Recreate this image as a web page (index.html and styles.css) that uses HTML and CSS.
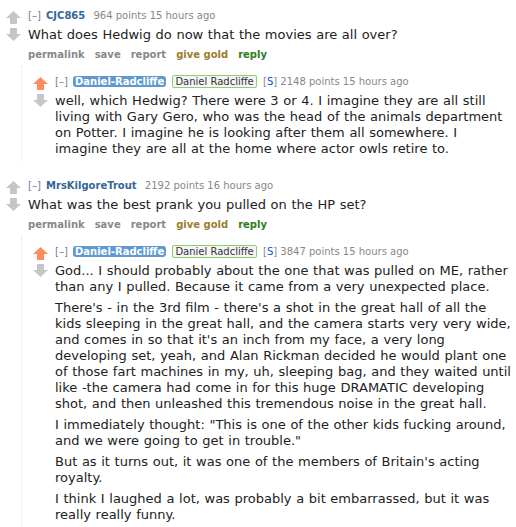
FILE: index.html
```html
<!DOCTYPE html>
<html lang="en">
<head>
    <meta charset="UTF-8">
    <title>Ask me anything - comments</title>
    <link rel="stylesheet" href="styles.css">
</head>
<body>
    <div class="comment top">
        <div class="midcol">
            <svg class="arrow" viewBox="0 0 15 14"><path d="M7.5 0 L15 7 H11 V13 H4 V7 H0 Z"/></svg>
            <svg class="arrow" viewBox="0 0 15 14"><path d="M4 1 H11 V7 H15 L7.5 14 L0 7 H4 Z"/></svg>
        </div>
        <div class="entry">
            <p class="tagline"><span class="expand">[&ndash;]</span> <span class="author">CJC865</span> <span class="score">964 points</span> 15 hours ago</p>
            <div class="md"><p>What does Hedwig do now that the movies are all over?</p></div>
            <ul class="buttons">
                <li>permalink</li>
                <li>save</li>
                <li>report</li>
                <li class="gold">give gold</li>
                <li class="reply">reply</li>
            </ul>
        </div>
        <div class="child">
            <div class="comment">
                <div class="midcol">
                    <svg class="arrow upmod" viewBox="0 0 15 14"><path d="M7.5 0 L15 7 H11 V13 H4 V7 H0 Z"/></svg>
                    <svg class="arrow" viewBox="0 0 15 14"><path d="M4 1 H11 V7 H15 L7.5 14 L0 7 H4 Z"/></svg>
                </div>
                <div class="entry">
                    <p class="tagline"><span class="expand">[&ndash;]</span> <span class="author submitter">Daniel-Radcliffe</span> <span class="flair">Daniel Radcliffe</span> <span class="op">[<b>S</b>]</span> <span class="score">2148 points</span> 15 hours ago</p>
                    <div class="md">
                        <p>well, which Hedwig? There were 3 or 4. I imagine they are all still<br>
                        living with Gary Gero, who was the head of the animals department<br>
                        on Potter. I imagine he is looking after them all somewhere. I<br>
                        imagine they are all at the home where actor owls retire to.</p>
                    </div>
                </div>
            </div>
        </div>
    </div>

    <div class="comment top">
        <div class="midcol">
            <svg class="arrow" viewBox="0 0 15 14"><path d="M7.5 0 L15 7 H11 V13 H4 V7 H0 Z"/></svg>
            <svg class="arrow" viewBox="0 0 15 14"><path d="M4 1 H11 V7 H15 L7.5 14 L0 7 H4 Z"/></svg>
        </div>
        <div class="entry">
            <p class="tagline"><span class="expand">[&ndash;]</span> <span class="author">MrsKilgoreTrout</span> <span class="score">2192 points</span> 16 hours ago</p>
            <div class="md"><p>What was the best prank you pulled on the HP set?</p></div>
            <ul class="buttons">
                <li>permalink</li>
                <li>save</li>
                <li>report</li>
                <li class="gold">give gold</li>
                <li class="reply">reply</li>
            </ul>
        </div>
        <div class="child">
            <div class="comment">
                <div class="midcol">
                    <svg class="arrow upmod" viewBox="0 0 15 14"><path d="M7.5 0 L15 7 H11 V13 H4 V7 H0 Z"/></svg>
                    <svg class="arrow" viewBox="0 0 15 14"><path d="M4 1 H11 V7 H15 L7.5 14 L0 7 H4 Z"/></svg>
                </div>
                <div class="entry">
                    <p class="tagline"><span class="expand">[&ndash;]</span> <span class="author submitter">Daniel-Radcliffe</span> <span class="flair">Daniel Radcliffe</span> <span class="op">[<b>S</b>]</span> <span class="score">3847 points</span> 15 hours ago</p>
                    <div class="md">
                        <p>God... I should probably about the one that was pulled on ME, rather<br>
                        than any I pulled. Because it came from a very unexpected place.</p>
                        <p>There's - in the 3rd film - there's a shot in the great hall of all the<br>
                        kids sleeping in the great hall, and the camera starts very very wide,<br>
                        and comes in so that it's an inch from my face, a very long<br>
                        developing set, yeah, and Alan Rickman decided he would plant one<br>
                        of those fart machines in my, uh, sleeping bag, and they waited until<br>
                        like -the camera had come in for this huge DRAMATIC developing<br>
                        shot, and then unleashed this tremendous noise in the great hall.</p>
                        <p>I immediately thought: "This is one of the other kids fucking around,<br>
                        and we were going to get in trouble."</p>
                        <p>But as it turns out, it was one of the members of Britain's acting<br>
                        royalty.</p>
                        <p>I think I laughed a lot, was probably a bit embarrassed, but it was<br>
                        really really funny.</p>
                    </div>
                </div>
            </div>
        </div>
    </div>
</body>
</html>
```

FILE: styles.css
```css
body {
    margin: 0;
    font-family: "DejaVu Sans", Verdana, sans-serif;
    background-color: #fff;
    color: #222;
}
.comment {
    display: grid;
    grid-template-columns: 15px 1fr;
    column-gap: 7px;
    padding: 9px 0 0 6px;
}
.comment.top {
    padding-bottom: 8px;
}
.midcol {
    grid-column: 1;
}
.arrow {
    display: block;
    width: 15px;
    height: 14px;
    margin-top: 2px;
    fill: #c6c6c6;
}
.arrow.upmod {
    fill: #ff8b60;
}
.entry {
    grid-column: 2;
    min-width: 0;
}
.tagline {
    margin: 0;
    font-size: 10px;
    line-height: 13px;
    color: #888;
}
.expand {
    color: #6b7ea6;
    margin-right: 2px;
}
.author {
    color: #369;
    font-weight: bold;
    margin-right: 5px;
}
.author.submitter {
    background-color: #5f99cf;
    color: #fff;
    border-radius: 3px;
    padding: 0 2px;
    margin-right: 3px;
}
.flair {
    color: #333;
    background-color: #f5f5f5;
    border: 1px solid #8fcf6a;
    border-radius: 2px;
    padding: 0 2px;
    margin-right: 3px;
}
.op b {
    font-weight: normal;
    color: #0055df;
}
.md {
    font-size: 13px;
    line-height: 16px;
    word-spacing: 0.5px;
    white-space: nowrap;
}
.md p {
    margin: 5px 0;
}
.buttons {
    list-style: none;
    margin: 0;
    padding: 0;
    display: flex;
    gap: 10px;
    font-size: 10px;
    font-weight: bold;
    line-height: 14px;
    color: #888;
}
.buttons .gold {
    color: #9a7d2e;
}
.buttons .reply {
    color: #2e7d1a;
}
.child {
    grid-column: 1 / -1;
    margin: 4px 0 0 15px;
    padding-left: 5px;
    border-left: 1px dotted #ddf;
}
```
